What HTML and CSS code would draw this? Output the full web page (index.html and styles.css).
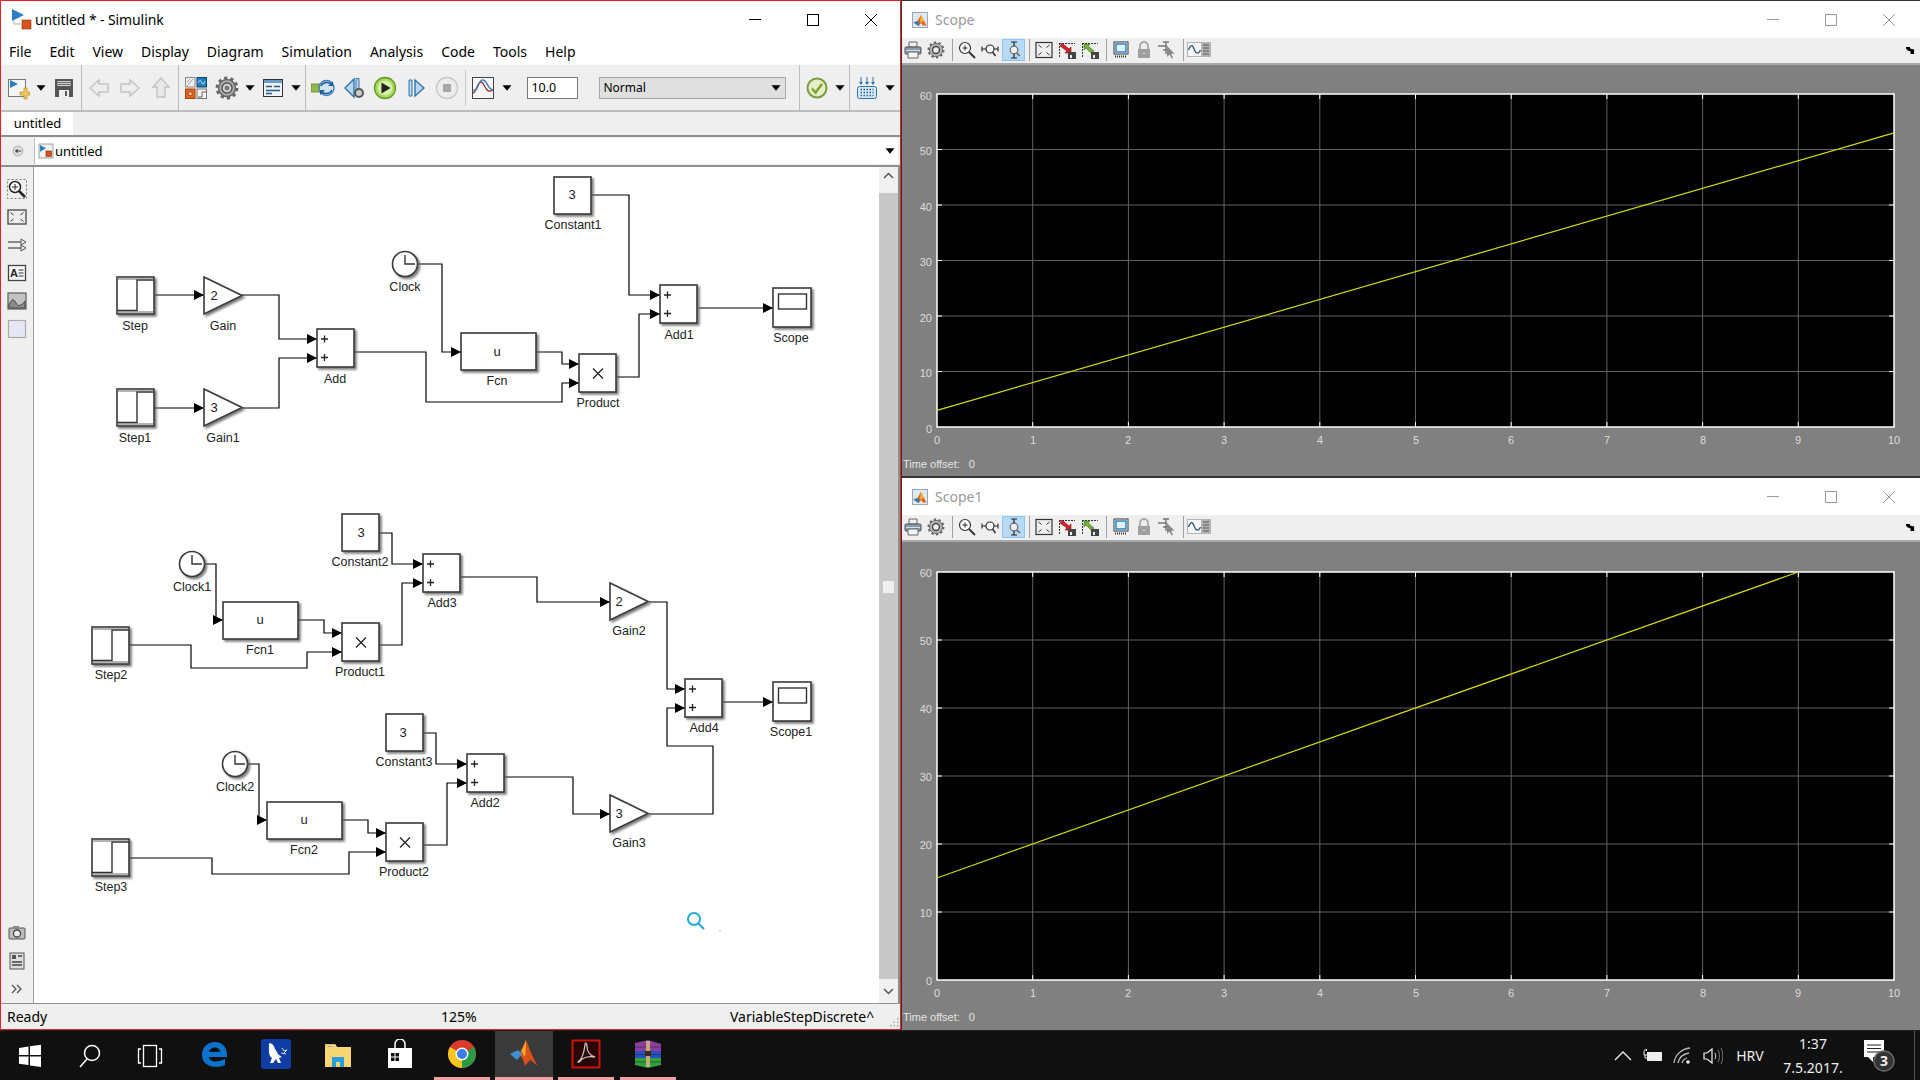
FILE: index.html
```html
<!DOCTYPE html>
<html lang="en">
<head>
<meta charset="utf-8">
<title>untitled * - Simulink</title>
<link rel="stylesheet" href="styles.css">
</head>
<body>
<svg class="defs" aria-hidden="true">
  <defs>
    <filter id="sh" x="-20%" y="-20%" width="150%" height="150%"><feDropShadow dx="2" dy="2" stdDeviation="1.2" flood-color="#555" flood-opacity=".75"/></filter>
    <marker id="ah" markerUnits="userSpaceOnUse" markerWidth="11" markerHeight="12" refX="10" refY="6" orient="auto"><path d="M0 1 10 6 0 11z" fill="#000"/></marker>
    <g id="step"><rect width="37" height="37" class="blk"/><path d="M0 33.500H20V3H37" class="in"/><path d="M0 35H37M0 2H37" class="in2"/></g>
    <g id="gain"><path d="M0 0 38 18.500 0 37z" class="blk"/></g>
    <g id="sum"><rect width="37" height="38" class="blk"/><path d="M4 10h7M7.500 6.500v7M4 28.500h7M7.500 25v7" class="pl"/></g>
    <g id="prod"><rect width="37" height="38" class="blk"/><path d="M14 14.500l10 10M24 14.500l-10 10" class="pl"/></g>
    <g id="const"><rect width="37" height="37" class="blk"/></g>
    <g id="fcn"><rect width="75" height="37" class="blk"/></g>
    <g id="clock"><circle r="12.500" class="blk"/><path d="M0-9V0H10" class="in"/></g>
    <g id="scope"><rect width="38" height="39" class="blk"/><rect x="5.500" y="6" width="28" height="15" class="in"/></g>

    <symbol id="i-new" viewBox="0 0 24 24"><rect x="2.500" y="3.500" width="17" height="17" fill="#f4f4f4" stroke="#777"/><path d="M4 4v8l8-4z" fill="#2a7fc0"/><path d="M14 16h4v-4h3v4h3v3h-3v4h-3v-4h-4z" fill="#f5c95c" stroke="#b98a22" stroke-width=".7"/></symbol>
    <symbol id="i-save" viewBox="0 0 24 24"><path d="M3 3h18v18H3z" fill="#555"/><path d="M5.500 5h13v5h-13z" fill="#d8d8d8"/><path d="M6 6.500h12M6 8.500h12" stroke="#666"/><path d="M7 14h10v7H7z" fill="#eee"/><path d="M13 15h2v5h-2z" fill="#555"/></symbol>
    <symbol id="i-left" viewBox="0 0 24 24"><path d="M3 12l9-8v4h9v8h-9v4z" fill="#eee" stroke="#c4c4c4" stroke-width="1.500"/></symbol>
    <symbol id="i-right" viewBox="0 0 24 24"><path d="M21 12l-9-8v4H3v8h9v4z" fill="#eee" stroke="#c4c4c4" stroke-width="1.500"/></symbol>
    <symbol id="i-up" viewBox="0 0 24 24"><path d="M12 2l8 9h-4v10H8V11H4z" fill="#e8e8e8" stroke="#c4c4c4" stroke-width="1.500"/></symbol>
    <symbol id="i-lib" viewBox="0 0 24 24"><rect x="1.500" y="1.500" width="9.500" height="9.500" fill="#eee" stroke="#888"/><path d="M3 10 9 3M3 6l3-3" stroke="#999" fill="none"/><rect x="13" y="1.500" width="9.500" height="9.500" fill="#1c7fc0" stroke="#146"/><path d="M14 7c2-5 3-2 4 0s2 1 3-2" stroke="#cfe9ff" fill="none"/><rect x="1.500" y="13" width="9.500" height="9.500" fill="#e2651c" stroke="#a33c08"/><rect x="4.500" y="16" width="3.500" height="3.500" fill="#f7c6a2" stroke="#a33c08" stroke-width=".7"/><rect x="13" y="13" width="9.500" height="9.500" fill="#f4f4f4" stroke="#777"/><path d="M14 21h4v-5h4" stroke="#666" fill="none"/></symbol>
    <symbol id="i-gear" viewBox="0 0 24 24"><circle cx="12" cy="12" r="8.500" fill="#aaa" stroke="#666" stroke-width="1.500"/><circle cx="12" cy="12" r="10" fill="none" stroke="#666" stroke-width="2.800" stroke-dasharray="3.200 3.080"/><circle cx="12" cy="12" r="5" fill="#ddd" stroke="#555" stroke-width="1.500"/><circle cx="12" cy="12" r="2.500" fill="#777"/></symbol>
    <symbol id="i-expl" viewBox="0 0 24 24"><rect x="2.500" y="3.500" width="19" height="17" fill="#eef2f6" stroke="#333"/><rect x="3" y="4" width="18" height="3" fill="#6c9dc4"/><path d="M5 10.500h6M13 10.500h6M5 14.500h14M5 17.500h6" stroke="#235a8c" stroke-width="1.400"/></symbol>
    <symbol id="i-mode" viewBox="0 0 24 24"><rect x="0" y="8" width="10" height="8" fill="#90b84a" stroke="#5f8420" stroke-width=".8"/><circle cx="15.500" cy="12" r="7.500" fill="#d2e4f4" stroke="#3d7fb8" stroke-width="1.400"/><path d="M10 10c2-4 8-5 11-1M21 14c-2 4-8 5-11 1" fill="none" stroke="#1f5e97" stroke-width="1.500"/><path d="M22 5v5h-5zM9 19v-5h5z" fill="#1f5e97"/></symbol>
    <symbol id="i-back" viewBox="0 0 24 24"><path d="M12 3v18L3 12z" fill="#b9d7f0" stroke="#2f74ad" stroke-width="1.400"/><path d="M14 2.500h3v12h-3z" fill="#b9d7f0" stroke="#2f74ad"/><circle cx="17" cy="17" r="4" fill="#ccc" stroke="#555" stroke-width="2"/></symbol>
    <symbol id="i-play" viewBox="0 0 24 24"><circle cx="12" cy="12" r="10.500" fill="#a9d85c" stroke="#5d9b28" stroke-width="1.300"/><circle cx="12" cy="12" r="7.500" fill="#d4f0a0"/><path d="M8.500 6.500v11l9-5.500z" fill="#222"/></symbol>
    <symbol id="i-fwd" viewBox="0 0 24 24"><path d="M5 4h3v16H5z" fill="#b9d7f0" stroke="#2f74ad"/><path d="M11 4v16l9-8z" fill="#b9d7f0" stroke="#2f74ad" stroke-width="1.400"/></symbol>
    <symbol id="i-stop" viewBox="0 0 24 24"><circle cx="12" cy="12" r="10.500" fill="#ececec" stroke="#c6c6c6" stroke-width="1.300"/><rect x="8" y="8" width="8" height="8" fill="#a8a8a8"/></symbol>
    <symbol id="i-plot" viewBox="0 0 24 24"><rect x="1.500" y="1.500" width="21" height="21" fill="#f6f6f6" stroke="#444"/><path d="M2 17c4-1 4-11 8-11s4 13 12 8" fill="none" stroke="#a43030" stroke-width="1.300"/><path d="M2 14c6 2 5-11 10-10s4 9 10 10" fill="none" stroke="#3a7cb8" stroke-width="1.300"/></symbol>
    <symbol id="i-check" viewBox="0 0 24 24"><circle cx="12" cy="12" r="9.500" fill="#e4efc8" stroke="#7c9a44" stroke-width="2"/><path d="M7 12.500l3.500 4L17 8" fill="none" stroke="#7aa52c" stroke-width="2.400"/></symbol>
    <symbol id="i-keys" viewBox="0 0 24 24"><rect x="2.500" y="10.500" width="19" height="12" rx="2" fill="#d8e8f6" stroke="#2873b2"/><path d="M5.500 13.500h13M5.500 16.500h13M5.500 19.500h13" stroke="#1f5e97" stroke-width="1.500" stroke-dasharray="1.500 1.500"/><path d="M6 1v7M12 1v7M18 1v7" stroke="#2873b2"/><path d="M4 6h4L6 9zM10 6h4l-2 3zM16 6h4l-2 3z" fill="#2873b2"/></symbol>
    <symbol id="i-nav" viewBox="0 0 24 24"><circle cx="12" cy="12" r="8.500" fill="#ddd" stroke="#888"/><path d="M6.500 12l5-4v3h6v2h-6v3z" fill="#444"/></symbol>
    <symbol id="i-model" viewBox="0 0 24 24"><rect x="1.500" y="1.500" width="21" height="21" fill="#f2f2f2" stroke="#777"/><path d="M3 3v10l9-5z" fill="#2a7fc0"/><rect x="12" y="12" width="8" height="8" fill="#d4531a" stroke="#8a3207"/></symbol>
    <symbol id="p-zoom" viewBox="0 0 20 20"><rect x=".5" y=".5" width="19" height="19" fill="none" stroke="#777" stroke-dasharray="2 2"/><circle cx="8" cy="8" r="5.500" fill="#fff" stroke="#222" stroke-width="1.500"/><path d="M12 12l6 6" stroke="#222" stroke-width="2.500"/><path d="M5 8h6M8 5v6" stroke="#222"/></symbol>
    <symbol id="p-fit" viewBox="0 0 20 20"><rect x="1" y="3" width="18" height="14" fill="#eee" stroke="#444" stroke-width="1.300"/><path d="M3.500 5.500l3 2.500M16.500 5.500l-3 2.500M3.500 14.500l3-2.500M16.500 14.500l-3-2.500" stroke="#333"/></symbol>
    <symbol id="p-arr" viewBox="0 0 20 20"><path d="M1 7h13M1 13h13" stroke="#222"/><path d="M14 4l5 3-5 3zM14 10l5 3-5 3z" fill="#eee" stroke="#555"/></symbol>
    <symbol id="p-note" viewBox="0 0 20 20"><rect x="1.500" y="2.500" width="17" height="15" fill="#f8f8f8" stroke="#444" stroke-width="1.300"/><text x="3" y="14" class="note-a">A</text><path d="M11.500 7h5M11.500 10h5M11.500 13h5" stroke="#333"/></symbol>
    <symbol id="p-img" viewBox="0 0 20 20"><rect x="1" y="2" width="18" height="16" fill="#c2c2c2" stroke="#666" stroke-width="1.300"/><path d="M2 14c3-7 5-6 7-2s5 3 9-2v7H2z" fill="#8c8c8c" stroke="#444"/></symbol>
    <symbol id="p-rect" viewBox="0 0 20 20"><rect x="1.500" y="1.500" width="17" height="17" fill="#e6e6f6" stroke="#aaa" stroke-width="1.200"/></symbol>
    <symbol id="p-cam" viewBox="0 0 20 20"><rect x="2" y="5" width="16" height="11" rx="1" fill="#bbb" stroke="#555"/><rect x="6" y="3" width="6" height="3" fill="#888"/><circle cx="10" cy="10.500" r="3.500" fill="#eee" stroke="#444" stroke-width="1.300"/></symbol>
    <symbol id="p-rep" viewBox="0 0 20 20"><rect x="3" y="2" width="14" height="16" fill="#ddd" stroke="#555"/><rect x="5" y="4" width="4" height="4" fill="#555"/><path d="M11 5h4M5 11h10M5 14h10" stroke="#444" stroke-width="1.500"/></symbol>
    <symbol id="p-more" viewBox="0 0 20 20"><path d="M5 6l4 4-4 4M10 6l4 4-4 4" fill="none" stroke="#555" stroke-width="1.300"/></symbol>

    <symbol id="s-print" viewBox="0 0 18 18"><path d="M5 1h8v5H5z" fill="#eee" stroke="#666"/><rect x="1" y="6" width="16" height="7" rx="1" fill="#8a9aa8" stroke="#555"/><path d="M4 11h10v6H4z" fill="#f4f4f4" stroke="#666"/><path d="M2 9.500h14" stroke="#cfe0ee"/></symbol>
    <symbol id="s-gear" viewBox="0 0 18 18"><circle cx="9" cy="9" r="6.500" fill="#bbb" stroke="#666"/><circle cx="9" cy="9" r="7.500" fill="none" stroke="#666" stroke-width="2" stroke-dasharray="2.400 2.300"/><circle cx="9" cy="9" r="3.500" fill="#eee" stroke="#444" stroke-width="1.400"/></symbol>
    <symbol id="s-zi" viewBox="0 0 18 18"><circle cx="7" cy="7" r="5.500" fill="#fff" stroke="#333" stroke-width="1.200"/><path d="M11 11l6 6" stroke="#333" stroke-width="2"/><path d="M4.500 7h5M7 4.500v5" stroke="#222"/></symbol>
    <symbol id="s-zx" viewBox="0 0 18 18"><circle cx="9" cy="8" r="4" fill="#fff" stroke="#333" stroke-width="1.200"/><path d="M11.500 11l3 4" stroke="#333" stroke-width="1.600"/><path d="M1 8h4M13 8h4M1 5.500v5M17 5.500v5" stroke="#222" stroke-width="1.100"/></symbol>
    <symbol id="s-zy" viewBox="0 0 18 18"><circle cx="9" cy="9" r="3.800" fill="#eee" stroke="#666" stroke-width="1.200"/><path d="M11.500 12l3.500 3" stroke="#666" stroke-width="1.600"/><path d="M9 1v4M9 13v4M6 1h6M6 17h6" stroke="#222" stroke-width="1.200"/></symbol>
    <symbol id="s-fit" viewBox="0 0 18 18"><rect x="1" y="1.500" width="16" height="15" fill="#eee" stroke="#333" stroke-width="1.200"/><path d="M3.500 4l3 2.500M14.500 4l-3 2.500M3.500 14l3-2.500M14.500 14l-3-2.500" stroke="#333"/></symbol>
    <symbol id="s-ax1" viewBox="0 0 18 18"><path d="M1 2.500h16" stroke="#333" stroke-dasharray="2 1"/><path d="M1.500 2v14" stroke="#333" stroke-dasharray="2 1"/><path d="M2 5l2-3 7 6 2-2v6H7l2-2z" fill="#d4202c" stroke="#801018" stroke-width=".6"/><rect x="10" y="11" width="8" height="7" fill="#444"/><rect x="12" y="14" width="2" height="3" fill="#eee"/></symbol>
    <symbol id="s-ax2" viewBox="0 0 18 18"><path d="M1 2.500h16" stroke="#333" stroke-dasharray="2 1"/><path d="M1.500 2v14" stroke="#333" stroke-dasharray="2 1"/><path d="M3 3h6L7 5l6 5-2 3-6-6-2 2z" fill="#74b03a" stroke="#3f6e15" stroke-width=".6"/><rect x="10" y="11" width="8" height="7" fill="#444"/><rect x="12" y="14" width="2" height="3" fill="#eee"/></symbol>
    <symbol id="s-mon" viewBox="0 0 18 18"><rect x="2" y="1" width="14" height="12" fill="#fff" stroke="#333"/><rect x="4" y="3" width="10" height="8" fill="#e4f1fb" stroke="#1d7cc4" stroke-width="1.400"/><path d="M3 15.500h12" stroke="#333" stroke-width="2" stroke-dasharray="1 1"/></symbol>
    <symbol id="s-lock" viewBox="0 0 18 18"><path d="M5 8V5a4 4 0 018 0v3" fill="none" stroke="#a8a8a8" stroke-width="1.800"/><rect x="3" y="8" width="12" height="9" fill="#a0a0a0"/><circle cx="9" cy="12.500" r="1" fill="#ccc"/></symbol>
    <symbol id="s-cur" viewBox="0 0 18 18"><path d="M0 5h9M5 1h6M8 1v12M5 9h5" stroke="#777" stroke-width="1.400"/><path d="M9 5v11l2.500-2.500 2 4 1.500-.7-2-4h3.500z" fill="#888"/></symbol>
    <symbol id="s-sig" viewBox="0 0 24 18"><rect width="24" height="15" y="1" fill="#b4b4b4"/><rect x="1" y="2" width="13" height="13" fill="#f6f6f6"/><path d="M1.500 9c3-8 5-3 6 0s4 5 6 0" fill="none" stroke="#264f7c" stroke-width="1.200"/><path d="M16 4h6M16 7h6M16 10h6M16 13h6" stroke="#555"/></symbol>
    <symbol id="m-logo" viewBox="0 0 16 16"><rect x=".5" y=".5" width="15" height="15" fill="#dfe7ef" stroke="#9aa7b4"/><path d="M1.500 10.500l4-1.500L9 3l2.500 5 3 5.500H11L9 11 6.500 14z" fill="#e2651c"/><path d="M1.500 10.500l4-1.500 2 2.500-1 2.500z" fill="#2a7fc0"/><path d="M9 3l2.500 5-2 3-1.500-2z" fill="#f2b632"/></symbol>
  </defs>
</svg>

<main class="desktop">
  <section class="simulink">
    <header class="titlebar">
      <svg class="title-icon" viewBox="0 0 21 21"><path d="M1 0v12l12-6z" fill="#2a7fc0"/><path d="M3 12v3h7" fill="none" stroke="#aaa"/><rect x="11" y="11" width="9" height="9" fill="#d4531a" stroke="#8a3207" stroke-width=".6"/></svg>
      <h1 class="title-text">untitled * - Simulink</h1>
      <div class="winbtns">
        <svg class="winbtn" viewBox="0 0 58 38"><path d="M23 18.500H35" stroke="#000"/></svg>
        <svg class="winbtn" viewBox="0 0 58 38"><rect x="23.500" y="13.500" width="11" height="11" fill="none" stroke="#000"/></svg>
        <svg class="winbtn" viewBox="0 0 58 38"><path d="M23 13l12 12M35 13 23 25" stroke="#000"/></svg>
      </div>
    </header>
    <nav class="menubar">
      <span>File</span><span>Edit</span><span>View</span><span>Display</span><span>Diagram</span><span>Simulation</span><span>Analysis</span><span>Code</span><span>Tools</span><span>Help</span>
    </nav>
    <div class="toolbar">
      <div class="tg g1">
        <svg class="ic"><use href="#i-new"/></svg><i class="drop"></i><svg class="ic"><use href="#i-save"/></svg>
      </div>
      <div class="tg g2">
        <svg class="ic"><use href="#i-left"/></svg><svg class="ic"><use href="#i-right"/></svg><svg class="ic"><use href="#i-up"/></svg>
      </div>
      <div class="tg g3">
        <svg class="ic lib"><use href="#i-lib"/></svg><svg class="ic"><use href="#i-gear"/></svg><i class="drop"></i><svg class="ic"><use href="#i-expl"/></svg><i class="drop"></i>
      </div>
      <div class="tg g4">
        <svg class="ic"><use href="#i-mode"/></svg><svg class="ic"><use href="#i-back"/></svg><svg class="ic"><use href="#i-play"/></svg><svg class="ic"><use href="#i-fwd"/></svg><svg class="ic"><use href="#i-stop"/></svg>
      </div>
      <div class="tg g5">
        <svg class="ic"><use href="#i-plot"/></svg><i class="drop"></i>
        <div class="stoptime">10.0</div>
        <div class="simmode"><span>Normal</span><i class="drop"></i></div>
      </div>
      <div class="tg g6">
        <svg class="ic"><use href="#i-check"/></svg><i class="drop"></i>
      </div>
      <div class="tg g7">
        <svg class="ic"><use href="#i-keys"/></svg><i class="drop"></i>
      </div>
    </div>
    <div class="tabs"><div class="tab">untitled</div></div>
    <div class="address">
      <div class="addr-nav"><svg class="pi-sm"><use href="#i-nav"/></svg></div>
      <div class="addr-box"><svg class="pi-model"><use href="#i-model"/></svg><span>untitled</span><i class="drop addr-drop"></i></div>
    </div>
    <div class="workspace">
      <aside class="palette">
        <div class="pal-group">
          <svg class="pi"><use href="#p-zoom"/></svg>
          <svg class="pi"><use href="#p-fit"/></svg>
          <svg class="pi"><use href="#p-arr"/></svg>
          <svg class="pi"><use href="#p-note"/></svg>
          <svg class="pi"><use href="#p-img"/></svg>
          <svg class="pi"><use href="#p-rect"/></svg>
        </div>
        <div class="pal-group">
          <svg class="pi"><use href="#p-cam"/></svg>
          <svg class="pi"><use href="#p-rep"/></svg>
          <svg class="pi"><use href="#p-more"/></svg>
        </div>
      </aside>
      <svg class="diagram" viewBox="34 167 845 836">
        <g class="wires">
          <polyline points="154,295 204,295"/>
          <polyline points="242,295 279,295 279,339 317,339"/>
          <polyline points="154,408 204,408"/>
          <polyline points="242,408 279,408 279,358 317,358"/>
          <polyline points="418,264 442,264 442,352 461,352"/>
          <polyline points="354,352 426,352 426,402 562,402 562,383 579,383"/>
          <polyline points="536,352 562,352 562,364 579,364"/>
          <polyline points="617,377 639,377 639,314 660,314"/>
          <polyline points="592,195 629,195 629,295 660,295"/>
          <polyline points="699,308 773,308"/>
          <polyline points="379,533 392,533 392,564 423,564"/>
          <polyline points="205,564 216,564 216,620 223,620"/>
          <polyline points="298,620 324,620 324,633 342,633"/>
          <polyline points="379,645 402,645 402,583 423,583"/>
          <polyline points="129,645 191,645 191,668 307,668 307,652 342,652"/>
          <polyline points="423,733 436,733 436,764 467,764"/>
          <polyline points="248,764 259,764 259,820 267,820"/>
          <polyline points="342,820 368,820 368,833 386,833"/>
          <polyline points="423,845 447,845 447,783 467,783"/>
          <polyline points="129,858 212,858 212,874 349,874 349,852 386,852"/>
          <polyline points="461,577 537,577 537,602 610,602"/>
          <polyline points="649,602 667,602 667,689 685,689"/>
          <polyline points="723,702 773,702"/>
          <polyline points="504,777 573,777 573,814 610,814"/>
          <polyline points="649,814 713,814 713,746 667,746 667,708 685,708"/>
        </g>
        <g class="blocks">
          <use href="#step" x="117" y="277"/><use href="#step" x="117" y="389"/><use href="#step" x="92" y="627"/><use href="#step" x="92" y="839"/>
          <use href="#gain" x="204" y="277"/><use href="#gain" x="204" y="389"/><use href="#gain" x="610" y="583"/><use href="#gain" x="610" y="795"/>
          <use href="#sum" x="317" y="329"/><use href="#sum" x="660" y="285"/><use href="#sum" x="423" y="554"/><use href="#sum" x="467" y="754"/><use href="#sum" x="685" y="679"/>
          <use href="#prod" x="579" y="354"/><use href="#prod" x="342" y="623"/><use href="#prod" x="386" y="823"/>
          <use href="#const" x="554" y="177"/><use href="#const" x="342" y="514"/><use href="#const" x="386" y="714"/>
          <use href="#fcn" x="461" y="333"/><use href="#fcn" x="223" y="602"/><use href="#fcn" x="267" y="802"/>
          <use href="#clock" x="405" y="264"/><use href="#clock" x="192" y="564"/><use href="#clock" x="235" y="764"/>
          <use href="#scope" x="773" y="288"/><use href="#scope" x="773" y="682"/>
        </g>
        <g class="inner">
          <text x="214" y="300">2</text><text x="214" y="412">3</text><text x="619" y="606">2</text><text x="619" y="818">3</text>
          <text x="572" y="199">3</text><text x="361" y="537">3</text><text x="403" y="737">3</text>
          <text x="497" y="356">u</text><text x="260" y="624">u</text><text x="304" y="824">u</text>
        </g>
        <g class="labels">
          <text x="135" y="330">Step</text><text x="223" y="330">Gain</text><text x="135" y="442">Step1</text><text x="223" y="442">Gain1</text>
          <text x="335" y="383">Add</text><text x="405" y="291">Clock</text><text x="497" y="385">Fcn</text><text x="598" y="407">Product</text>
          <text x="573" y="229">Constant1</text><text x="679" y="339">Add1</text><text x="791" y="342">Scope</text>
          <text x="360" y="566">Constant2</text><text x="442" y="607">Add3</text><text x="192" y="591">Clock1</text><text x="260" y="654">Fcn1</text>
          <text x="360" y="676">Product1</text><text x="111" y="679">Step2</text><text x="404" y="766">Constant3</text><text x="485" y="807">Add2</text>
          <text x="235" y="791">Clock2</text><text x="304" y="854">Fcn2</text><text x="404" y="876">Product2</text><text x="111" y="891">Step3</text>
          <text x="629" y="635">Gain2</text><text x="629" y="847">Gain3</text><text x="704" y="732">Add4</text><text x="791" y="736">Scope1</text>
        </g>
        <g class="cursor"><circle cx="694" cy="919" r="6"/><path d="M698.500 923.500l5.500 5.500"/></g>
        <circle cx="720" cy="931" r="1" fill="#b8dce8"/>
      </svg>
      <div class="vscroll">
        <div class="sb-btn"><svg viewBox="0 0 19 26" class="sb-arrow"><path d="M5 11l4.500-4.500L14 11" fill="none" stroke="#555" stroke-width="1.500"/></svg></div>
        <div class="sb-track"><div class="sb-thumb"></div></div>
        <div class="sb-btn end"><svg viewBox="0 0 19 24" class="sb-arrow"><path d="M5 10l4.500 4.500L14 10" fill="none" stroke="#555" stroke-width="1.500"/></svg></div>
      </div>
    </div>
    <footer class="status">
      <span class="st-ready">Ready</span>
      <span class="st-zoom">125%</span>
      <span class="st-solver">VariableStepDiscrete^</span>
      <svg class="grip" viewBox="0 0 10 10"><path d="M8 1h1.500v1.500H8zM8 4.500h1.500V6H8zM8 8h1.500v1.500H8zM4.500 4.500H6V6H4.500zM4.500 8H6v1.500H4.500zM1 8h1.500v1.500H1z" fill="#a0a0a0"/></svg>
    </footer>
  </section>

  <div class="scopes">
    <section class="scope-win first">
      <header class="scope-title">
        <svg class="scope-logo"><use href="#m-logo"/></svg><h2>Scope</h2>
        <div class="winbtns"><svg class="winbtn" viewBox="0 0 58 38"><path d="M23 18.500H35" stroke="#999"/></svg><svg class="winbtn" viewBox="0 0 58 38"><rect x="23.500" y="13.500" width="11" height="11" fill="none" stroke="#999"/></svg><svg class="winbtn" viewBox="0 0 58 38"><path d="M23 13l12 12M35 13 23 25" stroke="#999"/></svg></div>
      </header>
      <div class="scope-tools">
        <svg class="si"><use href="#s-print"/></svg><svg class="si"><use href="#s-gear"/></svg><i class="sep"></i>
        <svg class="si"><use href="#s-zi"/></svg><svg class="si"><use href="#s-zx"/></svg><span class="on"><svg class="si"><use href="#s-zy"/></svg></span><i class="sep"></i>
        <svg class="si"><use href="#s-fit"/></svg><svg class="si"><use href="#s-ax1"/></svg><svg class="si"><use href="#s-ax2"/></svg><i class="sep"></i>
        <svg class="si"><use href="#s-mon"/></svg><svg class="si"><use href="#s-lock"/></svg><svg class="si"><use href="#s-cur"/></svg><i class="sep"></i>
        <svg class="si sig"><use href="#s-sig"/></svg>
        <svg class="dock" viewBox="0 0 10 10"><path d="M0 1h4l1 2 4 1v5H5V6L2 5 0 3z" fill="#000"/></svg>
      </div>
      <svg class="plot p1" viewBox="902 65 1018 387">
        <rect x="937" y="94" width="957" height="333" fill="#000"/>
        <path class="grid" d="M1032.700 94V427M1128.400 94V427M1224.100 94V427M1319.800 94V427M1415.500 94V427M1511.200 94V427M1606.900 94V427M1702.600 94V427M1798.300 94V427M937 149.500H1894M937 205H1894M937 260.500H1894M937 316H1894M937 371.500H1894"/>
        <path class="ticks" d="M1032.700 94v5M1128.400 94v5M1224.100 94v5M1319.800 94v5M1415.500 94v5M1511.200 94v5M1606.900 94v5M1702.600 94v5M1798.300 94v5M1032.700 427v-5M1128.400 427v-5M1224.100 427v-5M1319.800 427v-5M1415.500 427v-5M1511.200 427v-5M1606.900 427v-5M1702.600 427v-5M1798.300 427v-5M937 149.500h5M937 205h5M937 260.500h5M937 316h5M937 371.500h5M1894 149.500h-5M1894 205h-5M1894 260.500h-5M1894 316h-5M1894 371.500h-5"/>
        <rect class="frame" x="937" y="94" width="957" height="333"/>
        <line class="trace" x1="937" y1="410.400" x2="1894" y2="132.900"/>
        <g class="ty"><text x="932" y="100">60</text><text x="932" y="155">50</text><text x="932" y="211">40</text><text x="932" y="266">30</text><text x="932" y="322">20</text><text x="932" y="377">10</text><text x="932" y="433">0</text></g>
        <g class="tx"><text x="937" y="444">0</text><text x="1033" y="444">1</text><text x="1128" y="444">2</text><text x="1224" y="444">3</text><text x="1320" y="444">4</text><text x="1416" y="444">5</text><text x="1511" y="444">6</text><text x="1607" y="444">7</text><text x="1703" y="444">8</text><text x="1798" y="444">9</text><text x="1894" y="444">10</text></g>
      </svg>
      <div class="offset"><span>Time offset:</span><span>0</span></div>
    </section>
    <section class="scope-win second">
      <header class="scope-title">
        <svg class="scope-logo"><use href="#m-logo"/></svg><h2>Scope1</h2>
        <div class="winbtns"><svg class="winbtn" viewBox="0 0 58 38"><path d="M23 18.500H35" stroke="#999"/></svg><svg class="winbtn" viewBox="0 0 58 38"><rect x="23.500" y="13.500" width="11" height="11" fill="none" stroke="#999"/></svg><svg class="winbtn" viewBox="0 0 58 38"><path d="M23 13l12 12M35 13 23 25" stroke="#999"/></svg></div>
      </header>
      <div class="scope-tools">
        <svg class="si"><use href="#s-print"/></svg><svg class="si"><use href="#s-gear"/></svg><i class="sep"></i>
        <svg class="si"><use href="#s-zi"/></svg><svg class="si"><use href="#s-zx"/></svg><span class="on"><svg class="si"><use href="#s-zy"/></svg></span><i class="sep"></i>
        <svg class="si"><use href="#s-fit"/></svg><svg class="si"><use href="#s-ax1"/></svg><svg class="si"><use href="#s-ax2"/></svg><i class="sep"></i>
        <svg class="si"><use href="#s-mon"/></svg><svg class="si"><use href="#s-lock"/></svg><svg class="si"><use href="#s-cur"/></svg><i class="sep"></i>
        <svg class="si sig"><use href="#s-sig"/></svg>
        <svg class="dock" viewBox="0 0 10 10"><path d="M0 1h4l1 2 4 1v5H5V6L2 5 0 3z" fill="#000"/></svg>
      </div>
      <svg class="plot p2" viewBox="902 542 1018 463">
        <rect x="937" y="572" width="957" height="408" fill="#000"/>
        <path class="grid" d="M1032.700 572V980M1128.400 572V980M1224.100 572V980M1319.800 572V980M1415.500 572V980M1511.200 572V980M1606.900 572V980M1702.600 572V980M1798.300 572V980M937 640H1894M937 708H1894M937 776H1894M937 844H1894M937 912H1894"/>
        <path class="ticks" d="M1032.700 572v5M1128.400 572v5M1224.100 572v5M1319.800 572v5M1415.500 572v5M1511.200 572v5M1606.900 572v5M1702.600 572v5M1798.300 572v5M1032.700 980v-5M1128.400 980v-5M1224.100 980v-5M1319.800 980v-5M1415.500 980v-5M1511.200 980v-5M1606.900 980v-5M1702.600 980v-5M1798.300 980v-5M937 640h5M937 708h5M937 776h5M937 844h5M937 912h5M1894 640h-5M1894 708h-5M1894 776h-5M1894 844h-5M1894 912h-5"/>
        <rect class="frame" x="937" y="572" width="957" height="408"/>
        <line class="trace" x1="937" y1="878" x2="1798.300" y2="572"/>
        <g class="ty"><text x="932" y="577">60</text><text x="932" y="645">50</text><text x="932" y="713">40</text><text x="932" y="781">30</text><text x="932" y="849">20</text><text x="932" y="917">10</text><text x="932" y="985">0</text></g>
        <g class="tx"><text x="937" y="997">0</text><text x="1033" y="997">1</text><text x="1128" y="997">2</text><text x="1224" y="997">3</text><text x="1320" y="997">4</text><text x="1416" y="997">5</text><text x="1511" y="997">6</text><text x="1607" y="997">7</text><text x="1703" y="997">8</text><text x="1798" y="997">9</text><text x="1894" y="997">10</text></g>
      </svg>
      <div class="offset"><span>Time offset:</span><span>0</span></div>
    </section>
  </div>

  <footer class="taskbar">
    <div class="slot sys"><svg class="tk" viewBox="0 0 28 28"><path d="M3 6l9.500-1.400V13H3zM14 4.300 25 2.800V13H14zM3 14.500h9.500V23L3 21.700zM14 14.500h11V25l-11-1.500z" fill="#fff"/></svg></div>
    <div class="slot sys"><svg class="tk" viewBox="0 0 28 28"><circle cx="16" cy="11" r="7.500" fill="none" stroke="#fff" stroke-width="1.500"/><path d="M11 17 4 25" stroke="#fff" stroke-width="1.500"/></svg></div>
    <div class="slot sys"><svg class="tk" viewBox="0 0 28 28"><rect x="7.500" y="3.500" width="13" height="21" fill="none" stroke="#fff" stroke-width="1.300"/><path d="M5 7H2.500v14H5M23 7h2.500v14H23" fill="none" stroke="#fff" stroke-width="1.300"/></svg></div>
    <div class="slot app"><svg class="tk" viewBox="0 0 28 28"><path d="M2 15C2 7 8 2 15 2c7 0 12 5 12 13v2H9c.5 5 8 6 16 2v6c-9 4-23 2-23-10zM9 12h11c0-6-10-6-11 0z" fill="#0b73ce"/></svg></div>
    <div class="slot app"><svg class="tk big" viewBox="0 0 30 30"><rect width="30" height="30" rx="3" fill="#0f3da3"/><path d="M8 4c3 0 5 2 6 6 2 3 3 6 7 8l-3 1 2 5h-3l-2-4-3 4h-3l2-5c-4-2-3-10-3-15z" fill="#fff"/><path d="M21 9l2 3 3-1-3 3M20 14l5 1" stroke="#cfe0ff" fill="none"/></svg></div>
    <div class="slot app"><svg class="tk big" viewBox="0 0 30 30"><path d="M2 5h10l2 3h14v20H2z" fill="#f7d774"/><path d="M2 5h10l2 3H2z" fill="#e9b949"/><path d="M9 28V18h12v10h-4v-5h-4v5z" fill="#2a9ce0"/><path d="M4 8v-1h9" stroke="#fff"/></svg></div>
    <div class="slot app"><svg class="tk big" viewBox="0 0 30 30"><path d="M3 9h24v20H3z" fill="#fff"/><path d="M10 9V5a5 5 0 0110 0v4" fill="none" stroke="#fff" stroke-width="1.500"/><path d="M6 14h3.500v3.500H6zM10.500 14H14v3.500h-3.500zM6 18.500h3.500V22H6zM10.500 18.500H14V22h-3.500z" fill="#101010"/></svg></div>
    <div class="slot app run"><svg class="tk big" viewBox="0 0 30 30"><circle cx="15" cy="15" r="14" fill="#d93a2b"/><path d="M15 15 27.100 8A14 14 0 0 1 15 29z" fill="#2b9a44"/><path d="M15 15 15 29A14 14 0 0 1 2.900 8z" fill="#f7c81f"/><circle cx="15" cy="15" r="6.500" fill="#fff"/><circle cx="15" cy="15" r="5" fill="#3a7ee8"/></svg></div>
    <div class="slot app run active"><svg class="tk big" viewBox="0 0 30 30"><path d="M17 1C20 8 24 20 29 27 26 25 23 22 21 21L16 27C15 22 13 18 10 15L12 12Z" fill="#d9501a"/><path d="M17 1C15 6 14 9 12 12L16 18C17 12 17 6 17 1Z" fill="#f5a623"/><path d="M1 15 9 11 13 15 8 21Z" fill="#3f8fd0"/></svg></div>
    <div class="slot app run"><svg class="tk big" viewBox="0 0 30 30"><rect x="1.500" y="1.500" width="27" height="27" fill="#2a0606" stroke="#c8140c" stroke-width="2"/><path d="M7 23c3-2 6-9 7-17 0-3 2-2 2 1 0 6 2 9 8 11-5-1-10 0-13 2-2 2-3 4-4 3z" fill="none" stroke="#c8c8c8" stroke-width="1.300"/></svg></div>
    <div class="slot app run"><svg class="tk big" viewBox="0 0 30 30"><path d="M2 4l13-3 13 4v7H2z" fill="#8a3fa0"/><path d="M2 12h26v7H2z" fill="#2a50c0"/><path d="M2 19h26v7l-13 3-13-3z" fill="#2fa03c"/><path d="M2 8h26M2 15.500h26M2 23h26" stroke="#222" stroke-opacity=".5"/><rect x="13" y="2" width="4" height="26" fill="#c8a878"/><rect x="12" y="12" width="6" height="5" fill="#3a2a10"/></svg></div>
    <div class="tray">
      <div class="ts"><svg class="ti" viewBox="0 0 20 20"><path d="M2 14l8-8 8 8" fill="none" stroke="#eee" stroke-width="1.300"/></svg></div>
      <div class="ts"><svg class="ti" viewBox="0 0 20 20"><rect x="4" y="6" width="15" height="9" fill="#eee"/><path d="M1 5v4h3M2 3v2M3.500 3v2M2 9v3h2" fill="none" stroke="#eee"/></svg></div>
      <div class="ts"><svg class="ti" viewBox="0 0 20 20"><path d="M1 17C2 9 8 3 17 2M5 17c1-5 5-9 11-10M9 17c.5-2 2-4 5-5" fill="none" stroke="#bbb" stroke-width="1.300"/><circle cx="15" cy="16" r="1.800" fill="#eee"/></svg></div>
      <div class="ts"><svg class="ti" viewBox="0 0 20 20"><path d="M1 7h3l5-4v14l-5-4H1z" fill="none" stroke="#eee" stroke-width="1.200"/><path d="M12 7c1 2 1 4 0 6" fill="none" stroke="#ddd"/><path d="M15 4c2 4 2 8 0 12M18 2c2.500 5 2.500 11 0 16" fill="none" stroke="#777"/></svg></div>
      <div class="ts lang">HRV</div>
      <div class="ts clock"><span>1:37</span><span>7.5.2017.</span></div>
      <div class="ts notif"><svg class="nt" viewBox="0 0 40 40"><path d="M5 4h20v17H14v5l-5-5H5z" fill="#fff"/><path d="M8 9h14M8 12.500h14M8 16h14" stroke="#222" stroke-width="1.200"/><circle cx="25" cy="25" r="10" fill="#333" stroke="#666" stroke-width="1.500"/><text x="25" y="30" class="badge">3</text></svg></div>
      <div class="ts show-desk"></div>
    </div>
  </footer>
</main>
</body>
</html>
```
FILE: styles.css
```css
* { box-sizing: border-box; }
html, body { margin: 0; padding: 0; width: 1920px; height: 1080px; overflow: hidden; }
body { font-family: "Noto Sans", "Open Sans", sans-serif; background: #101010; color: #000; }
h1, h2 { margin: 0; font-weight: 400; font-size: inherit; }
.defs { display: block; width: 0; height: 0; overflow: hidden; }

.desktop { display: grid; grid-template-columns: 901px 1019px; grid-template-rows: 1030px 50px; width: 1920px; height: 1080px; }

/* Simulink window */
.simulink { display: flex; flex-direction: column; border: 1px solid #e8202c; background: #fff; min-height: 0; }
.titlebar { height: 37px; display: flex; align-items: center; flex: none; background: #fff; font-size: 14px; }
.title-icon { width: 21px; height: 21px; margin-left: 10px; margin-right: 3px; flex: none; }
.title-text { font-size: 14px; letter-spacing: -.1px; }
.winbtns { margin-left: auto; display: flex; }
.winbtn { width: 58px; height: 38px; display: block; }
.simulink .winbtns { margin-right: 0; }

.menubar { height: 26px; display: flex; align-items: center; flex: none; padding-left: 8px; font-size: 14px; background: #fff; }
.menubar span { margin-right: 18px; }

.toolbar { height: 48px; flex: none; display: flex; background: #efefef; border-top: 1px solid #f8f8f8; border-bottom: 2px solid #bcbcbc; }
.tg { display: flex; align-items: center; padding-left: 5px; border-right: 1px solid #bcbcbc; height: 100%; }
.ic { width: 24px; height: 24px; flex: none; }
.drop { display: block; width: 0; height: 0; border-left: 6px solid transparent; border-right: 6px solid transparent; border-top: 6px solid #000; flex: none; transform: scale(.75, .9); }
.g1 { width: 81px; gap: 5px; }
.g2 { width: 97px; gap: 7px; }
.g3 { width: 127px; gap: 5px; }
.g3 .lib { margin-right: 2px; }
.g4 { width: 161px; gap: 7px; border-right-color: transparent; background: linear-gradient(#c8c8c8, #c8c8c8) right center / 1px 36px no-repeat; background-origin: border-box; }
.g5 { width: 334px; gap: 6px; }
.g6 { width: 50px; gap: 5px; }
.g7 { width: 50px; gap: 5px; border-right: 0; }
.stoptime { margin-left: 8px; width: 51px; height: 22px; background: #fff; border: 1px solid #777; font-size: 12.500px; line-height: 20px; padding-left: 3px; }
.simmode { margin-left: 15px; width: 187px; height: 22px; background: #e0e0e0; border: 1px solid #a8a8a8; font-size: 12px; line-height: 20px; padding: 0 3px 0 3px; display: flex; align-items: center; justify-content: space-between; }

.tabs { height: 23px; flex: none; background: #efefef; display: flex; padding-left: 1px; }
.tab { width: 71px; background: #fff; font-size: 13px; text-align: center; line-height: 23px; }
.address { height: 32px; flex: none; display: flex; border-top: 2px solid #8f8f8f; border-bottom: 2px solid #8f8f8f; background: #efefef; }
.addr-nav { width: 33px; display: flex; align-items: center; justify-content: center; }
.pi-sm { width: 14px; height: 14px; }
.addr-box { flex: 1; margin: 1px 2px 1px 0; background: #fff; border-left: 1px solid #bbb; display: flex; align-items: center; padding: 0 2px 0 3px; font-size: 13px; }
.pi-model { width: 16px; height: 16px; margin-right: 1px; }
.addr-drop { margin-left: auto; }

.workspace { flex: 1; display: flex; min-height: 0; border-bottom: 1px solid #8f8f8f; }
.palette { width: 33px; flex: none; background: #efefef; border-right: 1px solid #999; display: flex; flex-direction: column; justify-content: space-between; align-items: center; padding: 12px 0 4px; }
.pal-group { display: flex; flex-direction: column; gap: 8px; }
.pi { width: 20px; height: 20px; display: block; }
.note-a { font: 700 11px "Liberation Sans", Arial, sans-serif; fill: #222; }
.diagram { width: 845px; height: 836px; flex: none; background: #fff; display: block; }

.wires polyline { fill: none; stroke: #000; stroke-width: 1.200; marker-end: url(#ah); }
.blk { fill: #fff; stroke: #3a3a3a; stroke-width: 1.600; }
.blocks use { filter: url(#sh); }
.in { fill: none; stroke: #333; stroke-width: 1.400; }
.in2 { fill: none; stroke: #666; stroke-width: 1; }
.pl { fill: none; stroke: #222; stroke-width: 1.300; }
.inner text { font: 13px "Liberation Sans", Arial, sans-serif; text-anchor: middle; fill: #222; }
.labels text { font: 12.500px "Liberation Sans", Arial, sans-serif; text-anchor: middle; fill: #222; }
.cursor { fill: none; stroke: #1fa8d8; stroke-width: 2; }

.vscroll { width: 19px; flex: none; background: #c8c8c8; display: flex; flex-direction: column; }
.sb-btn { height: 26px; background: #f0f0f0; flex: none; }
.sb-btn.end { height: 24px; }
.sb-arrow { display: block; width: 19px; height: 100%; }
.sb-track { flex: 1; padding: 388px 4px 0; }
.sb-thumb { height: 12px; background: #f0f0f0; }
.workspace::after { content: ""; width: 2px; background: #8f8f8f; flex: none; }

.status { height: 25px; flex: none; background: #efefef; display: flex; align-items: center; font-size: 14px; padding-left: 6px; }
.st-ready { width: 434px; }
.st-zoom { width: 289px; }
.st-solver { letter-spacing: 0; }
.grip { width: 10px; height: 10px; margin-left: auto; align-self: flex-end; margin-bottom: 2px; margin-right: 1px; }

/* Scope windows */
.scopes { display: flex; flex-direction: column; border-left: 1px solid #333; min-height: 0; }
.scope-win { display: flex; flex-direction: column; background: #808080; flex: none; }
.scope-win.first { height: 478px; border-top: 1px solid #333; border-bottom: 2px solid #333; }
.scope-win.second { height: 552px; }
.scope-title { height: 37px; background: #fff; display: flex; align-items: center; flex: none; color: #9a9a9a; font-size: 14px; padding-left: 10px; }
.scope-logo { width: 16px; height: 16px; margin-right: 7px; }
.scope-title .winbtns { margin-right: 2px; }
.scope-tools { height: 27px; flex: none; background: #efefef; border-bottom: 2px solid #a8a8a8; display: flex; align-items: center; padding: 0 0 1px 2px; gap: 5px; }
.si { width: 18px; height: 18px; flex: none; display: block; }
.si.sig { width: 24px; margin-left: -2px; }
.sep { width: 1px; height: 22px; background: #a0a0a0; flex: none; margin-left: 2px; }
.on { background: #b6daf6; border: 1px solid #8cc4f5; padding: 1px 1.500px; display: block; flex: none; margin: 0 -3px 0 -2px; }
.dock { width: 9px; height: 9px; margin-left: auto; margin-right: 5px; }
.plot { display: block; width: 1018px; flex: none; }
.p1 { height: 387px; }
.p2 { height: 463px; }
.grid { stroke: #626262; stroke-width: 1; fill: none; }
.ticks { stroke: #fff; stroke-width: 1; fill: none; }
.frame { fill: none; stroke: #fff; stroke-width: 1.500; }
.trace { stroke: #d8d800; stroke-width: 1.200; }
.ty text, .tx text { font: 11px "Liberation Sans", Arial, sans-serif; fill: #dcdcdc; }
.ty text { text-anchor: end; }
.tx text { text-anchor: middle; }
.offset { flex: 1; display: flex; align-items: center; gap: 9px; padding-left: 1px; font: 11px "Liberation Sans", Arial, sans-serif; color: #e4e4e4; }
.second .offset { padding-bottom: 2px; }

/* Taskbar */
.taskbar { grid-column: 1 / 3; background: #101010; display: flex; height: 50px; border-top: 1px solid #202020; }
.slot { height: 49px; display: flex; align-items: center; justify-content: center; flex: none; }
.slot.sys { width: 60px; }
.slot.sys:nth-child(3) { margin-right: 3px; }
.slot.app { width: 56px; margin: 0 3px; border-bottom: 3px solid transparent; }
.slot.run { border-bottom-color: #f3a0a4; }
.slot.app.active { background: #3a3a3a; width: 58px; margin: 0 2px; }
.tk { width: 28px; height: 28px; display: block; }
.tk.big { width: 30px; height: 30px; }
.tray { margin-left: auto; display: flex; align-items: center; height: 49px; color: #eee; }
.ts { width: 30px; height: 49px; display: flex; align-items: center; justify-content: center; flex: none; }
.ti { width: 20px; height: 20px; }
.ts.lang { width: 44px; font-size: 14px; }
.ts.clock { width: 82px; flex-direction: column; font-size: 14px; line-height: 24px; }
.ts.notif { width: 50px; }
.nt { width: 40px; height: 40px; }
.badge { font: 700 14px "Noto Sans", sans-serif; fill: #eee; text-anchor: middle; }
.ts.show-desk { width: 6px; margin-left: 10px; border-left: 1px solid #555; }
```
